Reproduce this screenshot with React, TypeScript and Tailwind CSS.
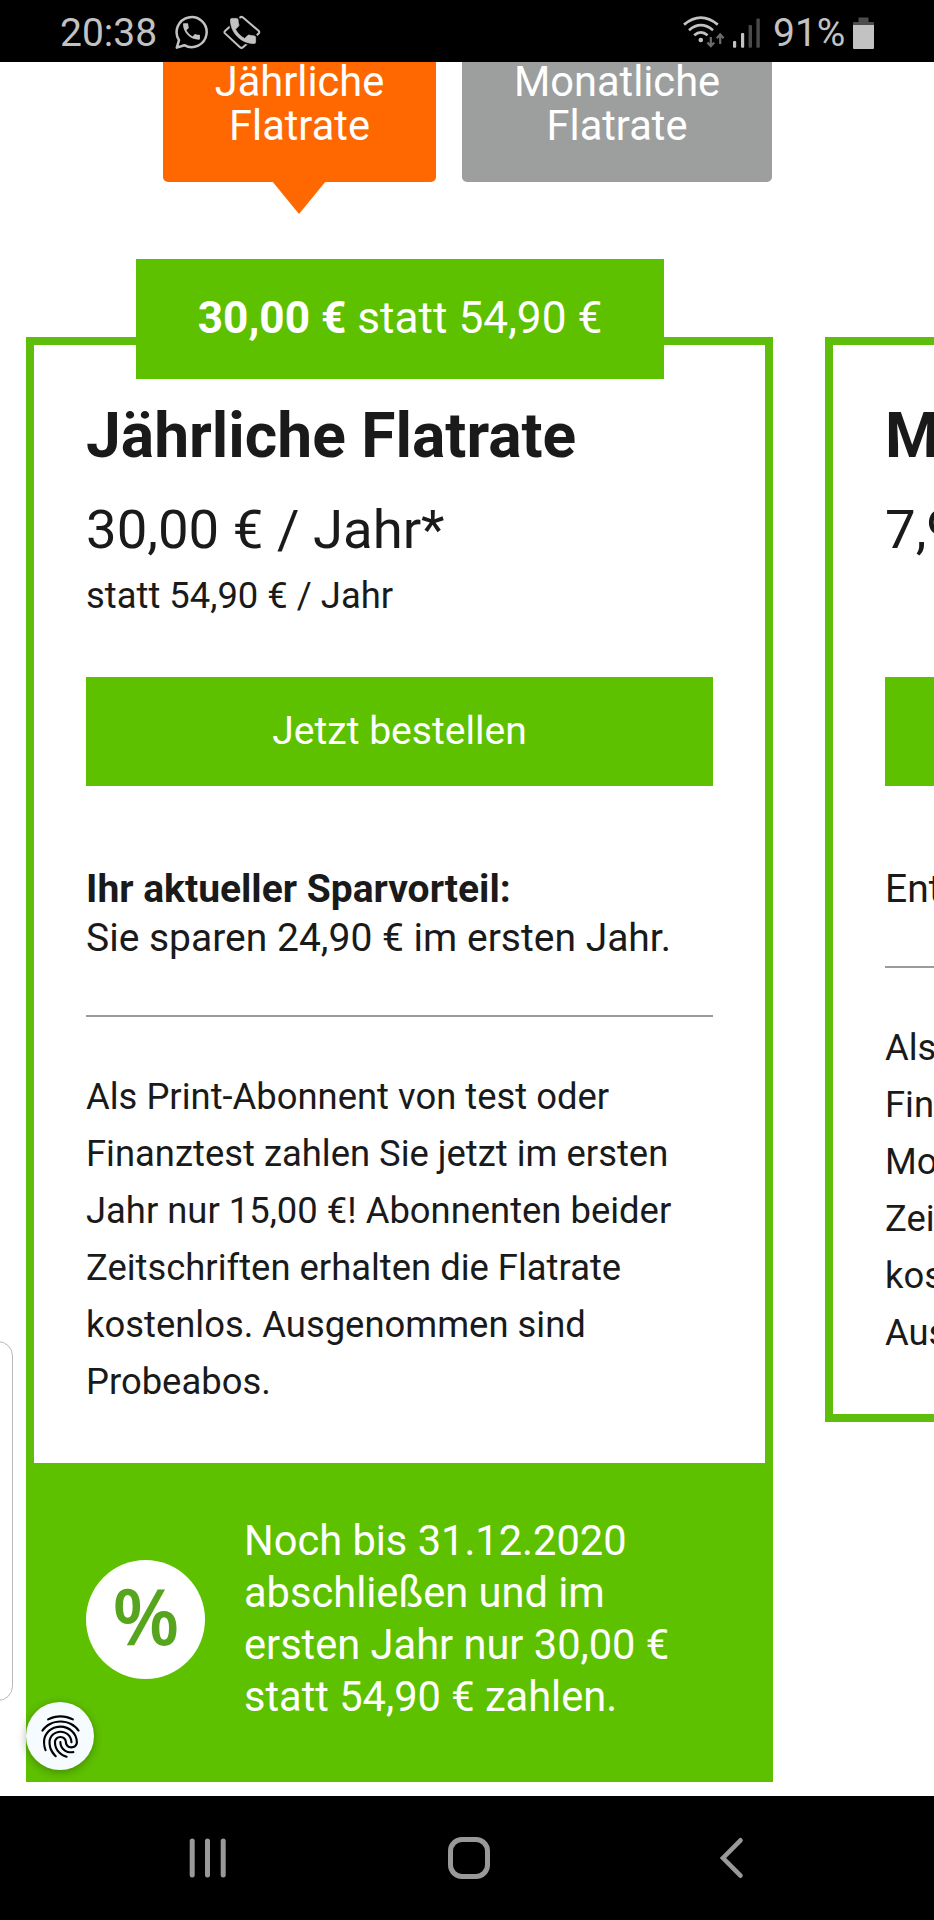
import { MdFingerprint } from "react-icons/md";

const HANDSET =
  "M6.62 10.79c1.44 2.83 3.76 5.14 6.59 6.59l2.2-2.2c.27-.27.67-.36 1.02-.24 1.12.37 2.33.57 3.57.57.55 0 1 .45 1 1V20c0 .55-.45 1-1 1-9.39 0-17-7.61-17-17 0-.55.45-1 1-1h3.5c.55 0 1 .45 1 1 0 1.25.2 2.45.57 3.57.11.35.03.74-.25 1.02l-2.2 2.2z";

function WhatsAppIcon() {
  return (
    <svg className="ml-[19px] h-[35px] w-[35px] shrink-0" viewBox="0 0 35 35" fill="none">
      <path
        d="M9.3 30.2 1.8 32.6 4 25.2A15 15 0 1 1 9.3 30.2Z"
        stroke="#c2c2c2"
        strokeWidth="2.5"
        strokeLinejoin="round"
      />
      <path d={HANDSET} fill="#c2c2c2" transform="translate(5.2 5.4) scale(0.94 0.92)" />
    </svg>
  );
}

function CallCardIcon() {
  return (
    <svg className="ml-[13px] h-[35px] w-[38px] shrink-0" viewBox="0 0 38 35" fill="none">
      <path
        d="M17 2.6Q18.5 1.2 20 2.6L35.6 15.8Q37 17.2 35.6 18.6L20 32.2Q18.5 33.6 17 32.2L2 18.4Q.8 17.2 2 16Z"
        stroke="#c2c2c2"
        strokeWidth="2"
      />
      <g transform="translate(3.2 -.8) scale(1.4)">
        <path d={HANDSET} fill="#000" stroke="#000" strokeWidth="2.6" />
        <path d={HANDSET} fill="#c2c2c2" stroke="#c2c2c2" strokeWidth=".5" />
      </g>
    </svg>
  );
}

function SignalIcons() {
  return (
    <svg className="h-[35px] w-[78px] shrink-0" viewBox="682 15 78 35" fill="none">
      <g stroke="#c2c2c2" strokeWidth="2.7" strokeLinecap="butt">
        <path d="M684 24.6Q700.8 10.6 717.8 24.6" />
        <path d="M689 30.2Q700.8 20.2 713 30.2" />
        <path d="M694.2 35.2Q700.8 29.4 707.6 35.2" />
      </g>
      <circle cx="700.8" cy="40" r="2.3" fill="#c2c2c2" />
      <g stroke="#6c6c6c" strokeWidth="2.2">
        <path d="M710.8 37V46M707.4 42.4 710.8 46.2 714.2 42.4" />
        <path d="M720.2 44V35M716.8 38.2 720.2 34.4 723.6 38.2" />
      </g>
      <rect x="733" y="41" width="3.2" height="6.8" rx="1" fill="#c2c2c2" />
      <rect x="741" y="33" width="3.2" height="14.8" rx="1" fill="#c2c2c2" />
      <rect x="748.6" y="25" width="3.4" height="22.8" rx="1" fill="#4a4a4a" />
      <rect x="756.4" y="18.4" width="3.4" height="29.4" rx="1" fill="#4a4a4a" />
    </svg>
  );
}

function BatteryIcon() {
  return (
    <svg className="ml-[9px] h-[32px] w-[21px] shrink-0" viewBox="0 0 21 32">
      <path d="M5.5.5h10V5H20Q21 5 21 6V9H0V6Q0 5 1 5H5.5Z" fill="#4c4c4c" />
      <path d="M0 8H21V31Q21 32 20 32H1Q0 32 0 31Z" fill="#c2c2c2" />
    </svg>
  );
}

function StatusBar() {
  return (
    <header className="flex h-[62px] items-center bg-black px-[60px] pt-[3px] text-[39px] leading-[46px] text-[#c2c2c2]">
      <span className="w-[96px] pt-px whitespace-nowrap">20:38</span>
      <WhatsAppIcon />
      <CallCardIcon />
      <div className="ml-auto flex items-center">
        <SignalIcons />
        <span className="ml-[13px] w-[71px] pt-px whitespace-nowrap">91%</span>
        <BatteryIcon />
      </div>
    </header>
  );
}

function Tabs() {
  return (
    <nav className="flex h-[120px] gap-[26px] pl-[163px] text-center text-[41.6px] leading-[43.8px] text-white">
      <div className="relative w-[273px] rounded-b-[5px] bg-[#ff6800]">
        <p className="-mt-[2px]">
          Jährliche
          <br />
          Flatrate
        </p>
        <svg className="absolute top-[119px] left-[109px] h-[33px] w-[54px]" viewBox="0 0 54 33">
          <path d="M0 0H54L27 33Z" fill="#ff6800" />
        </svg>
      </div>
      <div className="w-[310px] rounded-b-[5px] bg-[#9d9f9e]">
        <p className="-mt-[2px]">
          Monatliche
          <br />
          Flatrate
        </p>
      </div>
    </nav>
  );
}

function Rule() {
  return <div className="mt-[52px] h-[2px] bg-[#9b9b9b]" />;
}

function YearlyCard() {
  return (
    <article className="w-[747px] shrink-0">
      <div className="relative border-x-8 border-t-8 border-[#5ebe0b] px-[52px] pt-[55px] pb-[53px]">
        <div className="absolute -top-[86px] left-[102px] flex h-[120px] w-[528px] items-center justify-center bg-[#5ec100] pb-[2px] text-[44.2px] leading-[52px] whitespace-pre text-white">
          <b className="font-bold">30,00 €</b> statt 54,90 €
        </div>
        <h2 className="text-[62.3px] leading-[72px] font-bold">Jährliche Flatrate</h2>
        <p className="mt-[25px] text-[54.5px] leading-[64px]">30,00 € / Jahr*</p>
        <p className="mt-[11px] h-[48px] text-[36.4px] leading-[48px]">statt 54,90 € / Jahr</p>
        <button className="mt-[57px] block h-[109px] w-full bg-[#5ec100] pb-px text-[39.1px] leading-[46px] text-white">
          Jetzt bestellen
        </button>
        <p className="mt-[79px] text-[39px] leading-[49px] whitespace-nowrap">
          <b className="font-bold">Ihr aktueller Sparvorteil:</b>
          <br />
          Sie sparen 24,90 € im ersten Jahr.
        </p>
        <Rule />
        <p className="mt-[52px] text-[36.4px] leading-[56.9px] whitespace-nowrap">
          Als Print-Abonnent von test oder
          <br />
          Finanztest zahlen Sie jetzt im ersten
          <br />
          Jahr nur 15,00 €! Abonnenten beider
          <br />
          Zeitschriften erhalten die Flatrate
          <br />
          kostenlos. Ausgenommen sind
          <br />
          Probeabos.
        </p>
      </div>
      <div className="flex h-[319px] items-center bg-[#5ec100] pb-[8px] pl-[60px] text-white">
        <div className="mt-px flex h-[119px] w-[119px] items-center justify-center rounded-full bg-white pb-[8px] pl-px font-['Open_Sans',sans-serif] text-[78px] leading-[111px] font-semibold text-[#57a51f]">
          %
        </div>
        <p className="ml-[39px] text-[41.6px] leading-[51.9px] whitespace-nowrap">
          Noch bis 31.12.2020
          <br />
          abschließen und im
          <br />
          ersten Jahr nur 30,00 €
          <br />
          statt 54,90 € zahlen.
        </p>
      </div>
    </article>
  );
}

function MonthlyCard() {
  return (
    <article className="w-[747px] shrink-0 border-8 border-[#5ebe0b] px-[52px] pt-[55px] pb-[53px]">
      <h2 className="text-[62.3px] leading-[72px] font-bold">M</h2>
      <p className="mt-[25px] text-[54.5px] leading-[64px]">7,9</p>
      <div className="mt-[116px] h-[109px] bg-[#5ec100]" />
      <p className="mt-[79px] text-[39px] leading-[49px]">Ent</p>
      <Rule />
      <p className="mt-[52px] text-[36.4px] leading-[56.9px]">
        Als
        <br />
        Fin
        <br />
        Mo
        <br />
        Zei
        <br />
        kos
        <br />
        Aus
      </p>
    </article>
  );
}

function NavigationBar() {
  return (
    <footer className="flex h-[124px] items-center bg-black pl-[189px]">
      <svg className="h-[40px] w-[37px]" viewBox="0 0 37 40" stroke="#999" strokeWidth="5" strokeLinecap="round">
        <path d="M3.2 3V37M18.5 3V37M34.2 3V37" />
      </svg>
      <div className="ml-[222px] h-[42px] w-[42px] rounded-[14px] border-[5px] border-[#999]" />
      <svg
        className="ml-[229px] h-[42px] w-[26px]"
        viewBox="0 0 26 42"
        fill="none"
        stroke="#999"
        strokeWidth="4.6"
        strokeLinecap="round"
      >
        <path d="M21.5 3.3 4 21 21.5 38.7" />
      </svg>
    </footer>
  );
}

export default function App() {
  return (
    <div className="flex h-[1920px] w-[934px] flex-col overflow-hidden bg-white font-['Roboto',sans-serif] text-[#1a1a1a]">
      <StatusBar />
      <main className="relative h-[1734px] overflow-hidden">
        <Tabs />
        <section className="mt-[155px] flex items-start gap-[52px] pl-[26px]">
          <YearlyCard />
          <MonthlyCard />
        </section>
        <div className="absolute top-[1279px] -left-[20px] h-[360px] w-[33px] rounded-[15px] border-[1.5px] border-[#b8b8b8] bg-white" />
        <div className="absolute top-[1640px] left-[26px] flex h-[68px] w-[68px] items-center justify-center rounded-full bg-[#f6fbff] shadow-[0_2px_10px_rgba(0,0,0,0.3)]">
          <MdFingerprint className="h-[51px] w-[51px] text-black" />
        </div>
      </main>
      <NavigationBar />
    </div>
  );
}
